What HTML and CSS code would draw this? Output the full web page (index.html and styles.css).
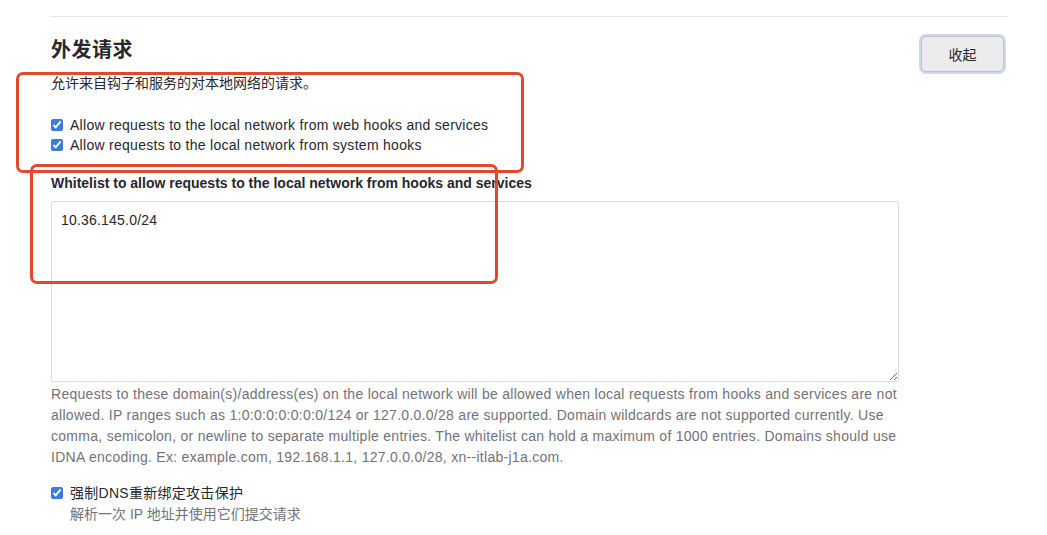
FILE: index.html
```html
<!DOCTYPE html>
<html lang="zh">
<head>
<meta charset="utf-8">
<link rel="stylesheet" href="styles.css">
</head>
<body>
<section class="settings">
  <div class="header">
    <div class="header-text">
      <h4 class="title">外发请求</h4>
      <p class="desc">允许来自钩子和服务的对本地网络的请求。</p>
    </div>
    <button class="btn">收起</button>
  </div>
  <div class="checks">
    <label class="check"><input type="checkbox" checked><span>Allow requests to the local network from web hooks and services</span></label>
    <label class="check"><input type="checkbox" checked><span>Allow requests to the local network from system hooks</span></label>
  </div>
  <div class="field">
    <label class="field-label">Whitelist to allow requests to the local network from hooks and services</label>
    <textarea class="textarea">10.36.145.0/24</textarea>
    <p class="help">Requests to these domain(s)/address(es) on the local network will be allowed when local requests from hooks and services are not allowed. IP ranges such as 1:0:0:0:0:0:0:0/124 or 127.0.0.0/28 are supported. Domain wildcards are not supported currently. Use comma, semicolon, or newline to separate multiple entries. The whitelist can hold a maximum of 1000 entries. Domains should use IDNA encoding. Ex: example.com, 192.168.1.1, 127.0.0.0/28, xn--itlab-j1a.com.</p>
  </div>
  <div class="dns">
    <label class="check"><input type="checkbox" checked><span>强制DNS重新绑定攻击保护</span></label>
    <p class="dns-help">解析一次 IP 地址并使用它们提交请求</p>
  </div>
</section>
<div class="mark mark-a"></div>
<div class="mark mark-b"></div>
</body>
</html>
```

FILE: styles.css
```css
* { box-sizing: border-box; }
html, body { margin: 0; padding: 0; background: #fff; }
body {
  font-family: "Liberation Sans", "Noto Sans CJK SC", sans-serif;
  font-size: 14px;
  letter-spacing: 0.28px;
  color: #333238;
  position: relative;
  width: 1047px;
  height: 535px;
  overflow: hidden;
}
.settings {
  margin: 16px 39px 0 50px;
  border-top: 1px solid #e6e6e8;
  padding-left: 1px;
}
.header {
  display: flex;
  justify-content: space-between;
  align-items: flex-start;
}
.title {
  margin: 20px 0 0;
  font-size: 20px;
  line-height: 26px;
  font-weight: 700;
  letter-spacing: 0.5px;
  color: #28272d;
}
.desc {
  margin: 10px 0 0;
  line-height: 20px;
  letter-spacing: 0;
  color: #28272d;
}
.btn {
  margin: 19px 4px 0 0;
  width: 83px;
  height: 36px;
  border: 1px solid #bfc0c6;
  border-radius: 5px;
  background: #ececef;
  box-shadow: 0 0 0 2px #cdd8f3;
  font-family: "Liberation Sans", "Noto Sans CJK SC", sans-serif;
  font-size: 14px;
  color: #28272d;
}
.checks {
  margin-top: 22px;
  display: flex;
  flex-direction: column;
}
.check {
  display: flex;
  align-items: center;
  line-height: 20px;
  color: #28272d;
}
.check input {
  margin: 0 7px 0 0;
  width: 12px;
  height: 12px;
  accent-color: #3a7be0;
}
.field { margin-top: 18px; }
.field-label {
  display: block;
  font-weight: 700;
  letter-spacing: 0;
  line-height: 20px;
  color: #28272d;
}
.textarea {
  display: block;
  margin-top: 8px;
  width: 848px;
  height: 181px;
  border: 1px solid #dcdcde;
  border-radius: 2px;
  padding: 8px 9px;
  font-family: "Liberation Sans", "Noto Sans CJK SC", sans-serif;
  font-size: 14px;
  letter-spacing: 0.2px;
  line-height: 20px;
  color: #28272d;
  resize: vertical;
}
.help {
  margin: 2px 0 0;
  width: 850px;
  line-height: 21px;
  color: #737278;
}
.dns { margin-top: 15px; }
.dns-help {
  margin: 1px 0 0 19px;
  line-height: 21px;
  letter-spacing: 0;
  color: #737278;
}
.mark {
  position: absolute;
  border: 3px solid #e2472f;
  border-radius: 7px;
  pointer-events: none;
}
.mark-a { left: 16px; top: 72px; width: 508px; height: 101px; }
.mark-b { left: 30px; top: 164px; width: 468px; height: 120px; }
```
